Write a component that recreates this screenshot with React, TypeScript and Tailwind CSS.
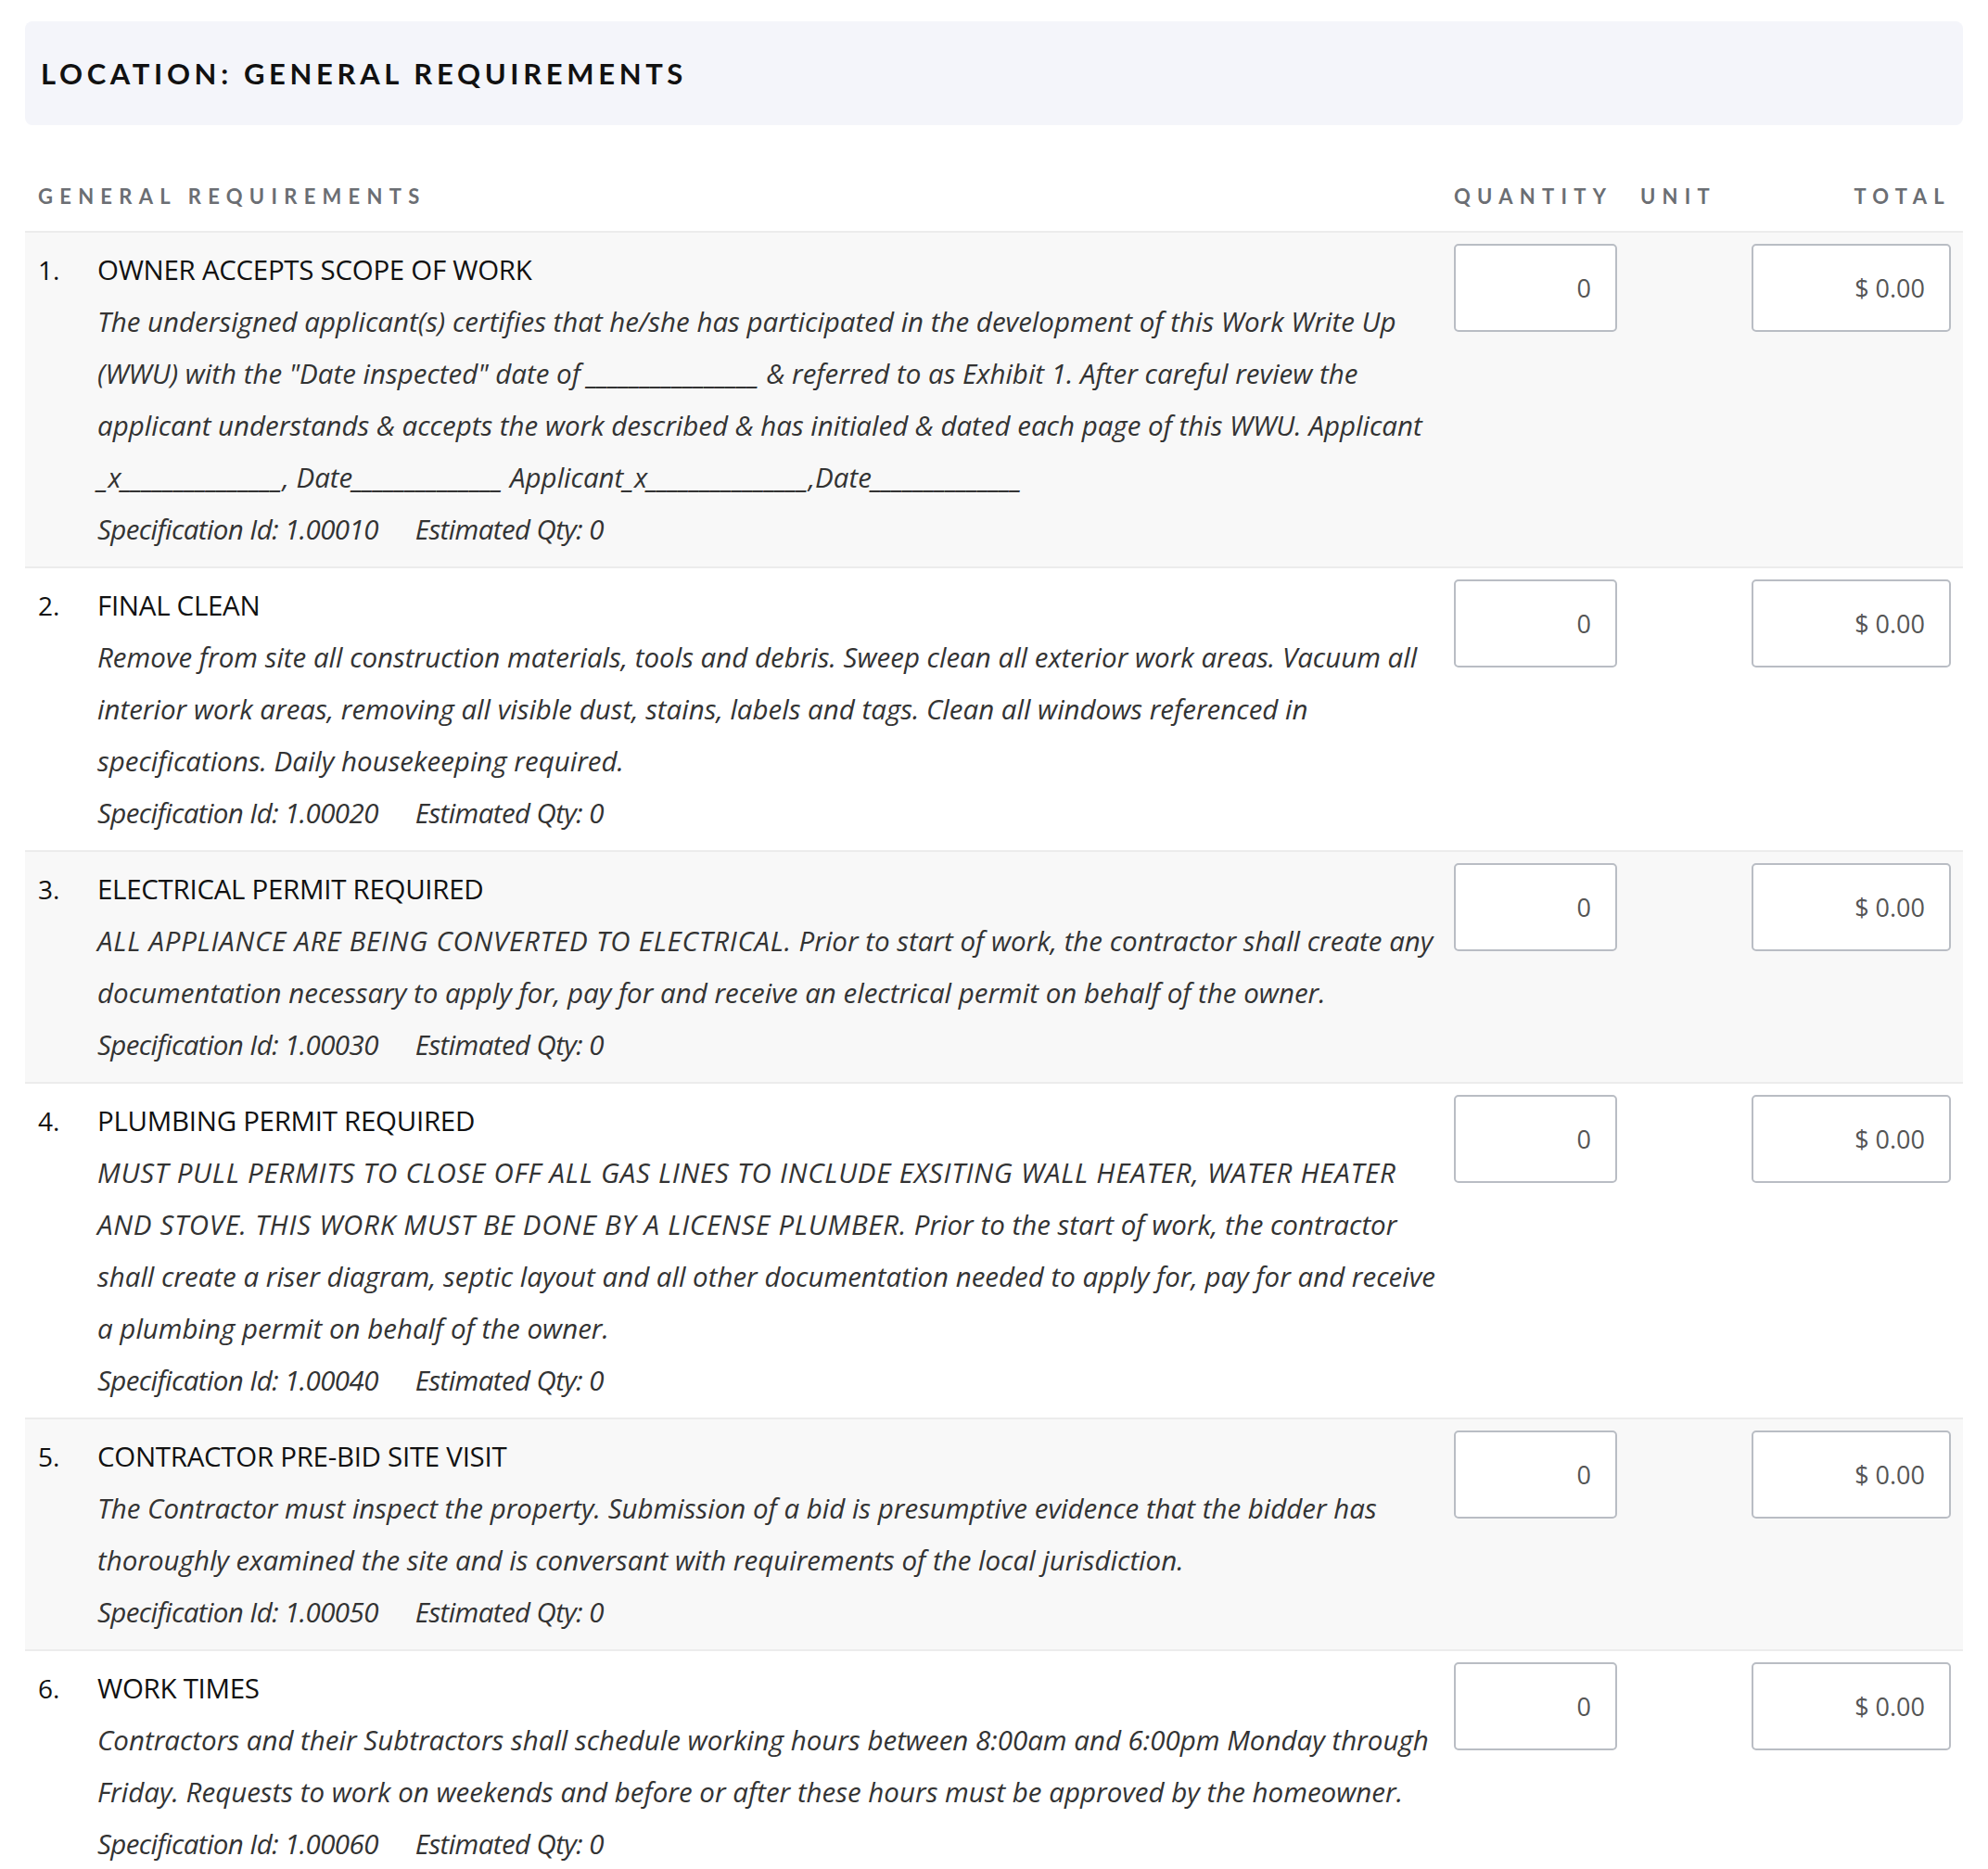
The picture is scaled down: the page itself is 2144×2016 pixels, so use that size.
import React from 'react';

interface SpecItem {
    id: string;
    title: string;
    caps?: string;
    description: string;
}

const ITEMS: SpecItem[] = [
    {
        id: '1.00010',
        title: 'OWNER ACCEPTS SCOPE OF WORK',
        description:
            'The undersigned applicant(s) certifies that he/she has participated in the development of this Work Write Up (WWU) with the "Date inspected" date of ________________ & referred to as Exhibit 1. After careful review the applicant understands & accepts the work described & has initialed & dated each page of this WWU. Applicant _x_______________, Date______________ Applicant_x_______________,Date______________',
    },
    {
        id: '1.00020',
        title: 'FINAL CLEAN',
        description:
            'Remove from site all construction materials, tools and debris. Sweep clean all exterior work areas. Vacuum all interior work areas, removing all visible dust, stains, labels and tags. Clean all windows referenced in specifications. Daily housekeeping required.',
    },
    {
        id: '1.00030',
        title: 'ELECTRICAL PERMIT REQUIRED',
        caps: 'ALL APPLIANCE ARE BEING CONVERTED TO ELECTRICAL.',
        description:
            'Prior to start of work, the contractor shall create any documentation necessary to apply for, pay for and receive an electrical permit on behalf of the owner.',
    },
    {
        id: '1.00040',
        title: 'PLUMBING PERMIT REQUIRED',
        caps: 'MUST PULL PERMITS TO CLOSE OFF ALL GAS LINES TO INCLUDE EXSITING WALL HEATER, WATER HEATER AND STOVE. THIS WORK MUST BE DONE BY A LICENSE PLUMBER.',
        description:
            'Prior to the start of work, the contractor shall create a riser diagram, septic layout and all other documentation needed to apply for, pay for and receive a plumbing permit on behalf of the owner.',
    },
    {
        id: '1.00050',
        title: 'CONTRACTOR PRE-BID SITE VISIT',
        description:
            'The Contractor must inspect the property. Submission of a bid is presumptive evidence that the bidder has thoroughly examined the site and is conversant with requirements of the local jurisdiction.',
    },
    {
        id: '1.00060',
        title: 'WORK TIMES',
        description:
            'Contractors and their Subtractors shall schedule working hours between 8:00am and 6:00pm Monday through Friday. Requests to work on weekends and before or after these hours must be approved by the homeowner.',
    },
];

const GRID =
    'grid grid-cols-[64px_1fr_176px_145px_215px] pl-[14px] pr-[13px]';

const App: React.FC = () => {
    return (
        <div className="min-h-screen bg-white px-[27px] pt-[23px] font-['Open_Sans',sans-serif] text-[#111]">
            {/* Location header */}
            <div className="flex h-[112px] items-center rounded-lg bg-[#f4f5fa] pl-[17px]">
                <h1 className="font-['Lato',sans-serif] text-[31px] font-bold tracking-[0.15em]">
                    LOCATION: GENERAL REQUIREMENTS
                </h1>
            </div>

            {/* Column headings */}
            <div
                className={`${GRID} items-end pt-[60px] pb-[21px] font-['Lato',sans-serif] text-[22px] font-bold tracking-[0.33em] text-[#6b6e73]`}
            >
                <div className="col-span-2">GENERAL REQUIREMENTS</div>
                <div>QUANTITY</div>
                <div className="pl-[25px]">UNIT</div>
                <div className="text-right">TOTAL</div>
            </div>

            {/* Rows */}
            <div className="border-t-2 border-[#ececec]">
                {ITEMS.map((item, i) => (
                    <div
                        key={item.id}
                        className={`${GRID} border-b-2 border-[#ececec] py-[12px] text-[29.5px] leading-[56px] ${
                            i % 2 === 0 ? 'bg-[#f8f8f8]' : 'bg-white'
                        }`}
                    >
                        <div className="text-[28px]">{i + 1}.</div>
                        <div className="pr-[13px]">
                            <div className="tracking-[-0.01em]">
                                {item.title}
                            </div>
                            <p className="text-[#333] italic">
                                {item.caps && (
                                    <>
                                        <span className="tracking-[0.025em]">
                                            {item.caps}
                                        </span>{' '}
                                    </>
                                )}
                                {item.description}
                            </p>
                            <p className="flex gap-[40px] tracking-[-0.02em] text-[#333] italic">
                                <span>Specification Id: {item.id}</span>
                                <span>Estimated Qty: 0</span>
                            </p>
                        </div>
                        <div>
                            <div className="flex h-[95px] items-center justify-end rounded-[5px] border-2 border-[#b9bdc4] bg-white pr-[26px] text-[27px] text-[#555]">
                                0
                            </div>
                        </div>
                        <div />
                        <div>
                            <div className="flex h-[95px] items-center justify-end rounded-[5px] border-2 border-[#b9bdc4] bg-white pr-[26px] text-[27px] text-[#555]">
                                $ 0.00
                            </div>
                        </div>
                    </div>
                ))}
            </div>
        </div>
    );
};

export default App;
